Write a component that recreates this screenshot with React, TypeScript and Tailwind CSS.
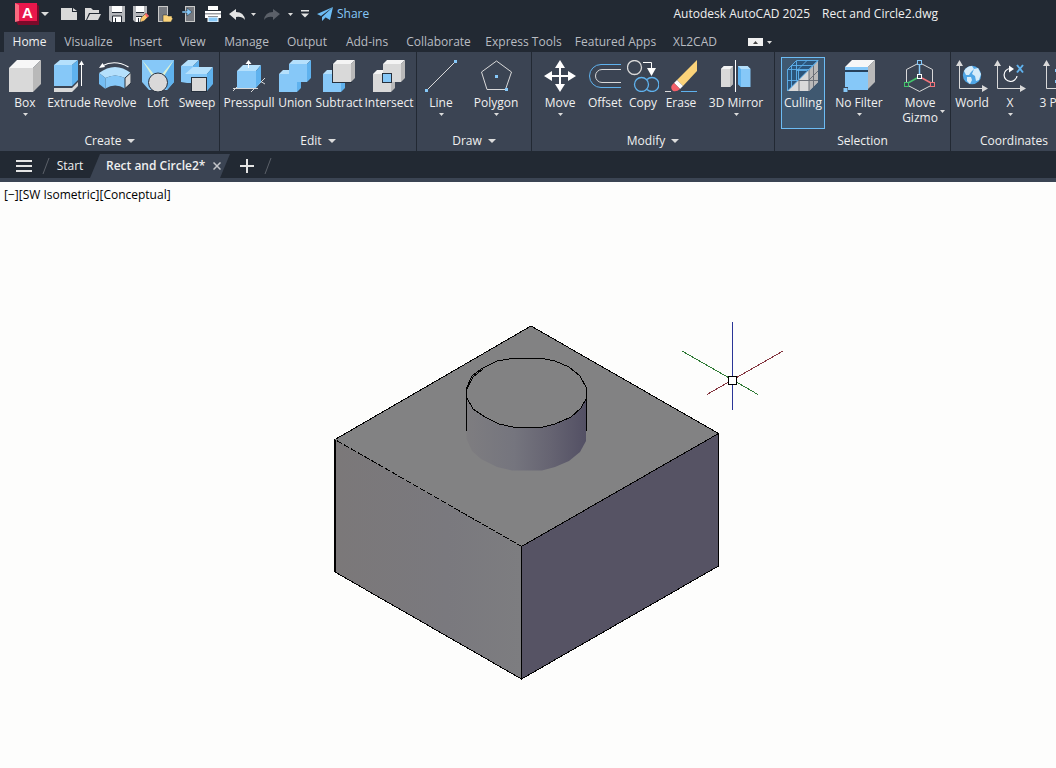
import type { ReactNode } from 'react';
import clsx from 'clsx';

const BLUE = '#86c8f8';
const LIGHT = '#b5e0fc';
const DEEP = '#5fb2ee';
const GREY = '#d9d9d9';
const SHADE = '#b9b9b9';
const INK = '#3b4453';

function Icon({ children }: { children: ReactNode }) {
  return (
    <svg width="32" height="32" viewBox="0 0 32 32" fill="none" className="block shrink-0" aria-hidden="true">
      {children}
    </svg>
  );
}

function Caret({ big = false }: { big?: boolean }) {
  return (
    <svg width={big ? 8 : 5} height={big ? 4 : 3} viewBox="0 0 8 4" preserveAspectRatio="none" className="block shrink-0" aria-hidden="true">
      <path d="M0 0h8L4 4z" fill="#dcdcdc" />
    </svg>
  );
}

interface CubeProps {
  x: number;
  y: number;
  size: number;
  depth: number;
  blue?: boolean;
}

function Cube({ x, y, size, depth, blue = false }: CubeProps) {
  const r = x + size;
  const b = y + size;
  return (
    <g>
      <rect x={x} y={y} width={size} height={size} fill={blue ? BLUE : GREY} />
      <path d={`M${x} ${y}l${depth} ${-depth}h${size}l${-depth} ${depth}z`} fill={blue ? LIGHT : '#f4f4f4'} />
      <path d={`M${r} ${y}l${depth} ${-depth}V${b - depth}L${r} ${b}z`} fill={blue ? DEEP : SHADE} />
    </g>
  );
}

function Axes() {
  return (
    <>
      <path d="M3.5 5v23.500H27" stroke={GREY} />
      <path d="M3.500 0L7 6H0zM32 28.500L26 25v7z" fill={GREY} />
    </>
  );
}

const icons = {
  box: (
    <Icon>
      <path d="M0 8h24v24H0z" fill={GREY} />
      <path d="M0 8l8-8h24l-8 8z" fill="#f7f7f7" />
      <path d="M24 8l8-8v24l-8 8z" fill={SHADE} />
    </Icon>
  ),
  extrude: (
    <Icon>
      <path d="M1 28h18l6-6v4l-6 6H1z" fill={GREY} />
      <path d="M1 5h18v21H1z" fill={BLUE} />
      <path d="M1 5l6-5h18l-6 5z" fill={LIGHT} />
      <path d="M19 5l6-5v20l-6 6z" fill={DEEP} />
      <path d="M28.500 4v22" stroke="#fff" />
      <path d="M28.500 0.500L31 5h-5z" fill="#fff" />
    </Icon>
  ),
  revolve: (
    <Icon>
      <path d="M3 6Q16-1 29.500 7" stroke="#fff" strokeWidth="1.200" />
      <path d="M0 8l3.500-5L6 7z" fill="#fff" />
      <path d="M0 13Q16 1 32 13L26 18Q16 13 6.500 18z" fill={LIGHT} />
      <path d="M6.500 18Q16 13 26 18v10.500q-10-6-19.500 0z" fill={BLUE} />
      <path d="M0 13l6.500 5v11L0 24z" fill="#74bdf3" />
      <path d="M26 18l6-5.500V23l-6 5.500z" fill={GREY} stroke="#26303d" />
    </Icon>
  ),
  loft: (
    <Icon>
      <path d="M0 0h32v22l-7 8H7l-7-8z" fill={BLUE} />
      <path d="M32 0v22l-7 8-3-15z" fill={DEEP} />
      <path d="M0 0l12 14-2 2zM32 0L20 14l2 2z" fill="#d9f0d6" />
      <path d="M2 0h28l-9 13H11z" fill={BLUE} />
      <circle cx="16" cy="22.500" r="9.500" fill={GREY} stroke="#26303d" />
    </Icon>
  ),
  sweep: (
    <Icon>
      <path d="M0 6h12v8h14v10l-2 8H11v-9H6l-6-1z" fill={BLUE} />
      <path d="M0 6l7-6h11l-6 6zM4 14l8-7h20l-6 7z" fill={LIGHT} />
      <path d="M12 6l6-6v7h-6zM26 14l6-7v17l-6 7z" fill={DEEP} />
      <rect x="10.500" y="17.500" width="15" height="14" fill={GREY} stroke="#26303d" />
    </Icon>
  ),
  presspull: (
    <Icon>
      <path d="M0 28.500h25M18 32L32 18M0 31l4-4M27 21l5 3" stroke={GREY} />
      <path d="M4 11h19v17H4z" fill={BLUE} />
      <path d="M4 11l6-6h18l-5 6z" fill={LIGHT} />
      <path d="M23 11l5-6v17l-5 6z" fill={DEEP} />
      <path d="M15.500 3v5" stroke="#fff" />
      <path d="M15.500 0l3 4h-6z" fill="#fff" />
    </Icon>
  ),
  union: (
    <Icon>
      <Cube x={0} y={14} size={18} depth={4} blue />
      <Cube x={10} y={4} size={18} depth={4} blue />
      <path d="M4 14h14v8H4z" fill={BLUE} />
    </Icon>
  ),
  subtract: (
    <Icon>
      <Cube x={0} y={14} size={18} depth={4} blue />
      <path d="M9 4v19h20l-1-19z" fill="#26303d" />
      <Cube x={10} y={4} size={18} depth={4} />
    </Icon>
  ),
  intersect: (
    <Icon>
      <Cube x={0} y={14} size={18} depth={4} />
      <Cube x={10} y={4} size={18} depth={4} />
      <rect x="9.500" y="13.500" width="9" height="9" fill={BLUE} stroke="#26303d" />
    </Icon>
  ),
  line: (
    <Icon>
      <path d="M3 29L29 3" stroke={GREY} />
      <path d="M0 29h3v3H0zM29 0h3v3h-3z" fill={BLUE} />
    </Icon>
  ),
  polygon: (
    <Icon>
      <path d="M16.500 1L31.500 12l-6 17.500H7L1.500 12z" stroke={GREY} />
      <path d="M15 15h3v3h-3zM25 28h3v3h-3z" fill={BLUE} />
    </Icon>
  ),
  move: (
    <Icon>
      <path d="M16 4v24M4 16h24" stroke="#fff" strokeWidth="2" />
      <path d="M16 0l5 8H11zM16 32l-5-8h10zM0 16l8-5v10zM32 16l-8 5V11z" fill="#fff" />
    </Icon>
  ),
  offset: (
    <Icon>
      <path d="M32 4.500H12a11.500 11.500 0 0 0 0 23h20" stroke={DEEP} />
      <path d="M32 9.500H13a6.500 6.500 0 0 0 0 13h19" stroke={GREY} />
    </Icon>
  ),
  copy: (
    <Icon>
      <circle cx="7.500" cy="7.500" r="7" stroke={GREY} strokeWidth="1.300" />
      <path d="M16 2.500h8.500V9" stroke="#fff" />
      <path d="M20 8h9l-4.500 8z" fill="#fff" />
      <circle cx="14.500" cy="24.500" r="7" stroke={DEEP} strokeWidth="1.300" />
      <path d="M20 19.500a7 7 0 1 1 0 10" stroke={DEEP} strokeWidth="1.300" />
    </Icon>
  ),
  erase: (
    <Icon>
      <path d="M0 31.500h6" stroke={GREY} />
      <path d="M16 31.500h16" stroke={DEEP} />
      <path d="M32 0v11L18 26l-6-6z" fill="#fbd37a" />
      <path d="M12 20l6 6-3 3-6-6z" fill="#fff" />
      <path d="M9 23l6 6q-3 3-7 2-3-3-1-6z" fill="#f4606a" />
    </Icon>
  ),
  mirror: (
    <Icon>
      <path d="M15.500 0v32" stroke="#fff" />
      <path d="M1 9l3-3h9v18l-3 3H1z" fill={GREY} />
      <path d="M10 9l3-3v18l-3 3z" fill={SHADE} />
      <path d="M1 9l3-3h9l-3 3z" fill="#f4f4f4" />
      <path d="M30.500 9l-3-3H18v18l3 3h9.500z" fill={BLUE} />
      <path d="M21 9l-3-3v18l3 3z" fill={DEEP} />
      <path d="M30.500 9l-3-3H18l3 3z" fill={LIGHT} />
    </Icon>
  ),
  culling: (
    <Icon>
      <path d="M22 9L0 31h22l9-9V0z" fill={GREY} />
      <path d="M22 9l9-9v22l-9 9z" fill={SHADE} />
      <path d="M12 20v11M4 20.500h27M22 9v22M22 20l9-9M26.500 5v22" stroke="#6b7078" />
      <path d="M0.500 31V9.500l9-9H31L0.500 31z" fill="#2c557a" />
      <path d="M0.500 31V9.500l9-9H31L22 9.500H0.500M9.500 1v20M4.500 5.500H26M4.500 5v22M0.500 20.500H11M11.500 9.500v10M9.500 10.500H20M11 9.500l9-9M0.500 31L31 0.500" stroke={DEEP} strokeWidth="0.900" />
    </Icon>
  ),
  filter: (
    <Icon>
      <path d="M2 7l7-7h23l-7 7z" fill="#f7f7f7" />
      <path d="M25 7l7-7v22l-7 7z" fill={SHADE} />
      <path d="M2 7h23v3H2zM2 12h23v18H2z" fill={BLUE} />
      <path d="M2 10h23v2H2z" fill="#26415c" />
      <path d="M0 27h5v5H0z" fill={INK} />
      <path d="M0.500 28h4v4h-4z" fill={BLUE} />
    </Icon>
  ),
  gizmo: (
    <Icon>
      <path d="M13 4L2.500 9.500V22M18 4l10.500 5.500V22M5 26l10.500 5.500L26 26" stroke={GREY} />
      <path d="M15.500 5v9" stroke={BLUE} strokeWidth="1.500" />
      <path d="M13 18l-9 5" stroke="#43c46b" strokeWidth="1.500" />
      <path d="M18 18l9 5" stroke="#f2737a" strokeWidth="1.500" />
      <rect x="13.500" y="0.500" width="4" height="4" fill={INK} stroke={BLUE} />
      <rect x="13.500" y="14.500" width="4" height="4" fill={INK} stroke="#fff" />
      <rect x="0.500" y="22.500" width="4" height="4" fill={INK} stroke="#43c46b" />
      <rect x="26.500" y="22.500" width="4" height="4" fill={INK} stroke="#f2737a" />
    </Icon>
  ),
  world: (
    <Icon>
      <Axes />
      <circle cx="16" cy="15" r="9.200" fill="#4fa6e6" />
      <path d="M8 11q3-5 8-5l2 3-3 3-2 3-3 0zM11 17l4 0 1 3-2 4-3-3zM18 9l4-1 3 6-2 6-3 1-1-5-3-2z" fill="#d6ecfa" />
    </Icon>
  ),
  rotateX: (
    <Icon>
      <Axes />
      <path d="M16 8.500a6.500 6.500 0 1 0 7 7.500" stroke="#fff" strokeWidth="1.200" />
      <path d="M15 5.500l5 3.500-5 3.500z" fill="#fff" />
      <path d="M23 5l6 7.500M29 5l-6 7.500" stroke={DEEP} strokeWidth="2" />
    </Icon>
  ),
  threePoint: (
    <Icon>
      <Axes />
      <path d="M12 9h3v3h-3zM12 20h3v3h-3z" fill={BLUE} />
    </Icon>
  ),
};

interface Tool {
  label: string;
  icon: ReactNode;
  width: string;
  menu?: boolean;
  active?: boolean;
}

interface PanelData {
  title: string;
  width: string;
  pad: string;
  more?: boolean;
  tools: Tool[];
}

const panels: PanelData[] = [
  {
    title: 'Create',
    width: 'w-[219px]',
    pad: 'pl-[2px]',
    more: true,
    tools: [
      { label: 'Box', icon: icons.box, width: 'w-11', menu: true },
      { label: 'Extrude', icon: icons.extrude, width: 'w-11' },
      { label: 'Revolve', icon: icons.revolve, width: 'w-12' },
      { label: 'Loft', icon: icons.loft, width: 'w-[38px]' },
      { label: 'Sweep', icon: icons.sweep, width: 'w-10' },
    ],
  },
  {
    title: 'Edit',
    width: 'w-[197px]',
    pad: 'pl-[2px]',
    more: true,
    tools: [
      { label: 'Presspull', icon: icons.presspull, width: 'w-[54px]' },
      { label: 'Union', icon: icons.union, width: 'w-[38px]' },
      { label: 'Subtract', icon: icons.subtract, width: 'w-[50px]' },
      { label: 'Intersect', icon: icons.intersect, width: 'w-[50px]' },
    ],
  },
  {
    title: 'Draw',
    width: 'w-[115px]',
    pad: 'pl-0',
    more: true,
    tools: [
      { label: 'Line', icon: icons.line, width: 'w-12', menu: true },
      { label: 'Polygon', icon: icons.polygon, width: 'w-[62px]', menu: true },
    ],
  },
  {
    title: 'Modify',
    width: 'w-[243px]',
    pad: 'pl-[2px]',
    more: true,
    tools: [
      { label: 'Move', icon: icons.move, width: 'w-[52px]', menu: true },
      { label: 'Offset', icon: icons.offset, width: 'w-[38px]' },
      { label: 'Copy', icon: icons.copy, width: 'w-[38px]' },
      { label: 'Erase', icon: icons.erase, width: 'w-[38px]' },
      { label: '3D Mirror', icon: icons.mirror, width: 'w-[72px]', menu: true },
    ],
  },
  {
    title: 'Selection',
    width: 'w-[176px]',
    pad: 'pl-[6px]',
    tools: [
      { label: 'Culling', icon: icons.culling, width: 'w-11', active: true },
      { label: 'No Filter', icon: icons.filter, width: 'w-[68px]', menu: true },
      { label: 'Move Gizmo', icon: icons.gizmo, width: 'w-[54px]', menu: true },
    ],
  },
  {
    title: 'Coordinates',
    width: 'w-[127px]',
    pad: 'pl-[2px]',
    tools: [
      { label: 'World', icon: icons.world, width: 'w-[38px]' },
      { label: 'X', icon: icons.rotateX, width: 'w-[38px]', menu: true },
      { label: '3 Point', icon: icons.threePoint, width: 'w-[60px]' },
    ],
  },
];

const tabs = [
  { name: 'Home', width: 'w-[51px]' },
  { name: 'Visualize', width: 'w-[67px]' },
  { name: 'Insert', width: 'w-[47px]' },
  { name: 'View', width: 'w-[47px]' },
  { name: 'Manage', width: 'w-[61px]' },
  { name: 'Output', width: 'w-[60px]' },
  { name: 'Add-ins', width: 'w-[60px]' },
  { name: 'Collaborate', width: 'w-[83px]' },
  { name: 'Express Tools', width: 'w-[87px]' },
  { name: 'Featured Apps', width: 'w-[97px]' },
  { name: 'XL2CAD', width: 'w-[62px]' },
];

const quickIcons = [
  { name: 'New', art: <path d="M0 2h11v4h5v8H0zM12 2l4 3h-4z" fill={GREY} /> },
  {
    name: 'Open',
    art: (
      <>
        <path d="M0 2h6l2 2h6v3H4L1 14H0z" fill={GREY} />
        <path d="M5 8h11l-3 6H2z" fill={GREY} />
      </>
    ),
  },
  {
    name: 'Save',
    art: (
      <>
        <path d="M0 0h16v16H2l-2-2z" fill="#b4b6ba" />
        <path d="M3 0h10v6H3zM4 10h9v6H4z" fill="#fff" />
        <path d="M3 6.500h10M3.500 16v-6h9v6M6.500 12v4" stroke="#222933" fill="none" />
      </>
    ),
  },
  {
    name: 'Save As',
    art: (
      <>
        <path d="M0 0h14v10l-6 6H2l-2-2z" fill="#b4b6ba" />
        <path d="M3 0h8v6H3zM3 11h6v5H3z" fill="#fff" />
        <path d="M3 6.500h8M3 10.500h6M5.500 12v4" stroke="#222933" fill="none" />
        <path d="M13 7l3 3-5 5-4 1 1-4z" fill="#fbc66b" stroke="#222933" strokeWidth="0.500" />
        <path d="M13 7l3 3-2 1.500-2-3z" fill="#f4606a" />
      </>
    ),
  },
  {
    name: 'Open from Web & Mobile',
    art: (
      <>
        <rect x="1.500" y="0.500" width="9" height="15" fill="#777a80" stroke="#c8c8c8" />
        <path d="M6 9h4l1 1h4v2h1l-2 4H6z" fill="#fbd37a" stroke="#222933" strokeWidth="0.500" />
      </>
    ),
  },
  {
    name: 'Save to Web & Mobile',
    art: (
      <>
        <rect x="4.500" y="0.500" width="9" height="15" fill="#777a80" stroke="#c8c8c8" />
        <path d="M1 5h5V2l5 4-5 4V7H1z" fill={BLUE} stroke="#222933" strokeWidth="0.500" />
      </>
    ),
  },
  {
    name: 'Plot',
    art: (
      <>
        <path d="M3 0h10v4H3zM0 5h16v7h-3v-2H3v2H0z" fill="#fff" />
        <path d="M0 7h16v1.500H0z" fill="#9a9da3" />
        <path d="M3 11h10v5H3z" fill={BLUE} stroke="#fff" />
      </>
    ),
  },
];

function TitleBar() {
  return (
    <header className="flex h-8 items-center pb-1 pl-[15px]">
      <button aria-label="Application menu" className="flex items-center gap-0.5">
        <svg width="24" height="22" viewBox="0 0 24 22" aria-hidden="true">
          <path d="M20 0l4 3v19H3l-2-4z" fill="#7c0a2a" />
          <path d="M0 0h22v18H2z" fill="#e8174b" />
          <path d="M0 0l4 2v16l-4 1z" fill="#fa6a80" />
          <text x="12.500" y="14.500" textAnchor="middle" fontFamily="Liberation Sans" fontWeight="700" fontSize="15" fill="#fff">
            A
          </text>
        </svg>
        <Caret big />
      </button>
      <div className="ml-3 flex gap-2">
        {quickIcons.map((q) => (
          <button key={q.name} aria-label={q.name}>
            <svg width="16" height="16" viewBox="0 0 16 16" className="block" aria-hidden="true">
              {q.art}
            </svg>
          </button>
        ))}
      </div>
      <button aria-label="Undo" className="ml-2 flex items-center gap-1.5">
        <svg width="16" height="14" viewBox="0 0 16 14" aria-hidden="true">
          <path d="M0 7l7-5v3q8 0 9 8-3-4-9-3v3z" fill="#e4e4e4" />
        </svg>
        <Caret />
      </button>
      <button aria-label="Redo" className="ml-2 flex items-center gap-2">
        <svg width="16" height="14" viewBox="0 0 16 14" aria-hidden="true">
          <path d="M16 7L9 2v3q-8 0-9 8 3-4 9-3v3z" fill="#5b6069" />
        </svg>
        <Caret />
      </button>
      <button aria-label="Customize Quick Access Toolbar" className="ml-2">
        <svg width="8" height="8" viewBox="0 0 8 8" className="block" aria-hidden="true">
          <path d="M0 0h8v1.500H0zM0 3.500h8L4 7.500z" fill="#e4e4e4" />
        </svg>
      </button>
      <button className="ml-2 flex items-center gap-1 text-[#86c8f8]">
        <svg width="16" height="14" viewBox="0 0 16 14" aria-hidden="true">
          <path d="M16 0L0 7l4 2zM16 0L5 10v4l3-3zM16 0L8 10l5 3z" fill="#6cbcf4" />
        </svg>
        Share
      </button>
      <h1 className="ml-auto flex gap-3 pr-[118px]">
        <span>Autodesk AutoCAD 2025</span>
        <span>Rect and Circle2.dwg</span>
      </h1>
    </header>
  );
}

function RibbonTabs() {
  return (
    <nav className="flex h-5 items-center pl-1 text-[#b9bcc2]">
      {tabs.map((tab, i) => (
        <button
          key={tab.name}
          className={clsx('h-5 shrink-0 text-center', tab.width, i === 0 && 'bg-[#3b4453] text-[#f0f0f0]')}
        >
          {tab.name}
        </button>
      ))}
      <button aria-label="Minimize ribbon" className="ml-[22px] flex items-center gap-1">
        <span className="flex h-2 w-[15px] items-center justify-center bg-[#f0f0f0]">
          <svg width="5" height="3" viewBox="0 0 5 3" aria-hidden="true">
            <path d="M0 3h5L2.500 0z" fill="#444" />
          </svg>
        </span>
        <Caret />
      </button>
    </nav>
  );
}

function ToolButton({ tool }: { tool: Tool }) {
  const sideCaret = tool.label === 'Move Gizmo';
  return (
    <button
      className={clsx(
        'relative flex h-[72px] shrink-0 flex-col items-center pt-[3px]',
        tool.width,
        tool.active && 'bg-[#3f5870] outline outline-1 -outline-offset-1 outline-[#6cbcf4]'
      )}
    >
      {tool.icon}
      <span className={clsx('mt-[3px] leading-[15px]', !sideCaret && 'whitespace-nowrap')}>{tool.label}</span>
      {tool.menu && (
        <span className={sideCaret ? 'absolute right-[2px] bottom-4' : 'mt-[3px]'}>
          <Caret />
        </span>
      )}
    </button>
  );
}

function Ribbon() {
  return (
    <div className="flex overflow-hidden bg-[#3b4453] pl-px">
      {panels.map((panel) => (
        <section key={panel.title} className={clsx('shrink-0 border-r border-[#222933] pt-[5px]', panel.width)}>
          <div className={clsx('flex', panel.pad)}>
            {panel.tools.map((tool) => (
              <ToolButton key={tool.label} tool={tool} />
            ))}
          </div>
          <div className="flex h-[22px] items-center justify-center gap-1.5 pt-0.5">
            <h2>{panel.title}</h2>
            {panel.more && <Caret big />}
          </div>
        </section>
      ))}
    </div>
  );
}

function Slash() {
  return (
    <svg width="8" height="16" viewBox="0 0 8 16" aria-hidden="true">
      <path d="M1 16L7 0" stroke="#5b6069" />
    </svg>
  );
}

function FileTabs() {
  return (
    <div className="flex h-[31px] items-end border-b-4 border-[#3b4453]">
      <div className="flex h-6 items-center">
        <button aria-label="File tab menu" className="ml-4 flex w-4 flex-col gap-[3px]">
          <span className="h-0.5 bg-[#e4e4e4]" />
          <span className="h-0.5 bg-[#e4e4e4]" />
          <span className="h-0.5 bg-[#e4e4e4]" />
        </button>
        <span className="ml-[10px]">
          <Slash />
        </span>
        <button className="w-10">Start</button>
        <div className="flex h-6 w-[140px] items-center gap-2 bg-[#3b4453] pl-4 [clip-path:polygon(10px_0,100%_0,130px_100%,0_100%)]">
          <button className="font-semibold whitespace-nowrap">Rect and Circle2*</button>
          <button aria-label="Close Rect and Circle2">
            <svg width="8" height="8" viewBox="0 0 8 8" className="block" aria-hidden="true">
              <path d="M0.500 0.500l7 7M7.500 0.500l-7 7" stroke="#c4c6ca" strokeWidth="1.500" />
            </svg>
          </button>
        </div>
        <button aria-label="New drawing" className="ml-2.5">
          <svg width="14" height="14" viewBox="0 0 14 14" className="block" aria-hidden="true">
            <path d="M7 0v14M0 7h14" stroke="#e4e4e4" strokeWidth="2" />
          </svg>
        </button>
        <span className="ml-2.5">
          <Slash />
        </span>
      </div>
    </div>
  );
}

function Drawing() {
  return (
    <svg width="1056" height="586" viewBox="0 182 1056 586" className="absolute top-0 left-0" role="img" aria-label="Box with cylinder">
      <defs>
        <linearGradient id="left" x1="0" x2="1">
          <stop offset="0" stopColor="#7b7879" />
          <stop offset="0.600" stopColor="#7a797e" />
          <stop offset="1" stopColor="#7d7d80" />
        </linearGradient>
        <linearGradient id="side" x1="0" x2="1">
          <stop offset="0" stopColor="#7e7d80" />
          <stop offset="0.400" stopColor="#75757e" />
          <stop offset="0.700" stopColor="#666472" />
          <stop offset="1" stopColor="#535064" />
        </linearGradient>
      </defs>
      <g stroke="#000" shapeRendering="crispEdges">
        <path d="M531 326L718.500 433.500L521.500 546.500L335 439.500z" fill="#828283" />
        <path d="M335 439.500L521.500 546.500V679L335 572z" fill="url(#left)" />
        <path d="M718.500 433.500L521.500 546.500V679L718.500 566z" fill="#565364" />
        <path d="M335 439v133" strokeWidth="2" />
        <path d="M335 439.500L521.500 546.500" stroke="#828283" strokeDasharray="2 6" />
      </g>
      <path d="M466.500 393V439L472 451L481 459L497 467L512 470.500H542L555 467L569 461L580 452L586 441V393z" fill="url(#side)" />
      <g stroke="#000" fill="none" shapeRendering="crispEdges">
        <path
          d="M466.500 388L472 376L481 369L497 361L512 358.500H542L555 361L569 367L580 376L586.500 388V398L581 408L571 417L555 424L541 427.500H515L499 424L485 417L473 409L467 398z"
          fill="#828283"
        />
        <path d="M466.500 388v43M586.500 388v43" />
        <path d="M467 389L473 377L483 369" />
      </g>
      <g fill="none" shapeRendering="crispEdges">
        <path d="M682 351L758 394.500" stroke="#2f7a35" />
        <path d="M783 351L707 394.500" stroke="#84353f" />
        <path d="M732.500 322v88" stroke="#2a3597" />
        <rect x="728.500" y="376.500" width="8" height="8" fill="#fff" stroke="#000" />
      </g>
    </svg>
  );
}

export default function App() {
  return (
    <div className="flex min-h-screen flex-col overflow-hidden bg-[#222933] font-['Open_Sans',sans-serif] text-[12px] leading-4 text-[#f0f0f0]">
      <TitleBar />
      <RibbonTabs />
      <Ribbon />
      <FileTabs />
      <main className="relative flex-1 overflow-hidden bg-[#fdfdfc] text-black">
        <Drawing />
        <div className="relative flex pt-[5px] pl-1">
          <button>[−]</button>
          <button>[SW Isometric]</button>
          <button>[Conceptual]</button>
        </div>
      </main>
    </div>
  );
}
